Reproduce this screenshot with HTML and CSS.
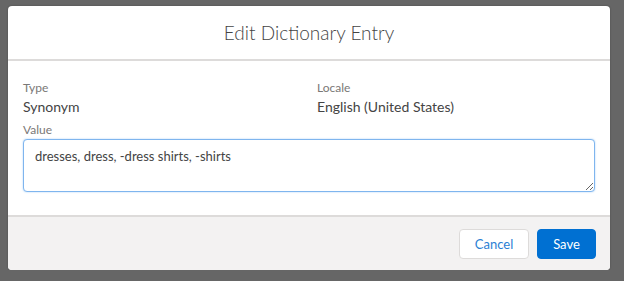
FILE: index.html
```html
<!DOCTYPE html>
<html lang="en">
<head>
  <meta charset="UTF-8">
  <title>Edit Dictionary Entry</title>
  <meta name="viewport" content="width=device-width, initial-scale=1.0">
  <link rel="stylesheet" href="styles.css">
</head>
<body>

<div class="modal">

  <!-- Header -->
  <div class="modal-header">
    <h2>Edit Dictionary Entry</h2>
  </div>

  <!-- Body -->
  <div class="modal-body">
    <div class="field-grid">
      <div class="field">
        <div class="label">Type</div>
        <div class="value">Synonym</div>
      </div>
      <div class="field">
        <div class="label">Locale</div>
        <div class="value">English (United States)</div>
      </div>
    </div>
    <div class="label value-label">Value</div>
    <textarea class="textarea">dresses, dress, -dress shirts, -shirts</textarea>
  </div>

  <!-- Footer -->
  <div class="modal-footer">
    <button class="button button-neutral">Cancel</button>
    <button class="button button-brand">Save</button>
  </div>
</div>

</body>
</html>
```

FILE: styles.css
```css
body {
  font-family: Lato, "Open Sans", Arial, sans-serif;
  background-color: #666666;
  margin: 0;
  padding: 6px 0 0 8px;
}

.modal {
  width: 602px;
  background-color: #ffffff;
  border-radius: 4px;
  overflow: hidden;
  box-shadow: 0 0 2px rgba(0, 0, 0, 0.3);
}

.modal-header {
  padding: 14px 15px 14px 15px;
  border-bottom: 2px solid #dddbda;
  text-align: center;
}

.modal-header h2 {
  margin: 0;
  font-size: 19px;
  line-height: 25px;
  font-weight: 300;
  color: #444444;
}

.modal-body {
  padding: 18px 15px 23px 15px;
}

.field-grid {
  display: grid;
  grid-template-columns: 1fr 1fr;
  gap: 16px;
}

.label {
  font-size: 12px;
  line-height: 18px;
  color: #7a7876;
}

.value {
  font-size: 14px;
  line-height: 20px;
  color: #444444;
}

.value-label {
  margin-top: 4px;
}

.textarea {
  display: block;
  box-sizing: border-box;
  width: 100%;
  height: 53px;
  margin: 0;
  padding: 6px 11px;
  font-family: inherit;
  font-size: 13px;
  line-height: 20px;
  color: #444444;
  border: 1px solid #7fb5ee;
  border-radius: 4px;
  box-shadow: 0 0 2px #a9cff5;
  outline: none;
  resize: vertical;
}

.modal-footer {
  display: flex;
  justify-content: flex-end;
  gap: 8px;
  padding: 12px 14px 11px 15px;
  background-color: #f3f2f2;
  border-top: 2px solid #dddbda;
}

.button {
  height: 30px;
  padding: 0 10px;
  font-family: inherit;
  font-size: 13px;
  border-radius: 4px;
  cursor: pointer;
}

.button-neutral {
  width: 70px;
  background-color: #ffffff;
  border: 1px solid #dddbda;
  color: #2a7fd4;
}

.button-brand {
  width: 59px;
  background-color: #0070d2;
  border: 1px solid #0070d2;
  color: #ffffff;
}
```
